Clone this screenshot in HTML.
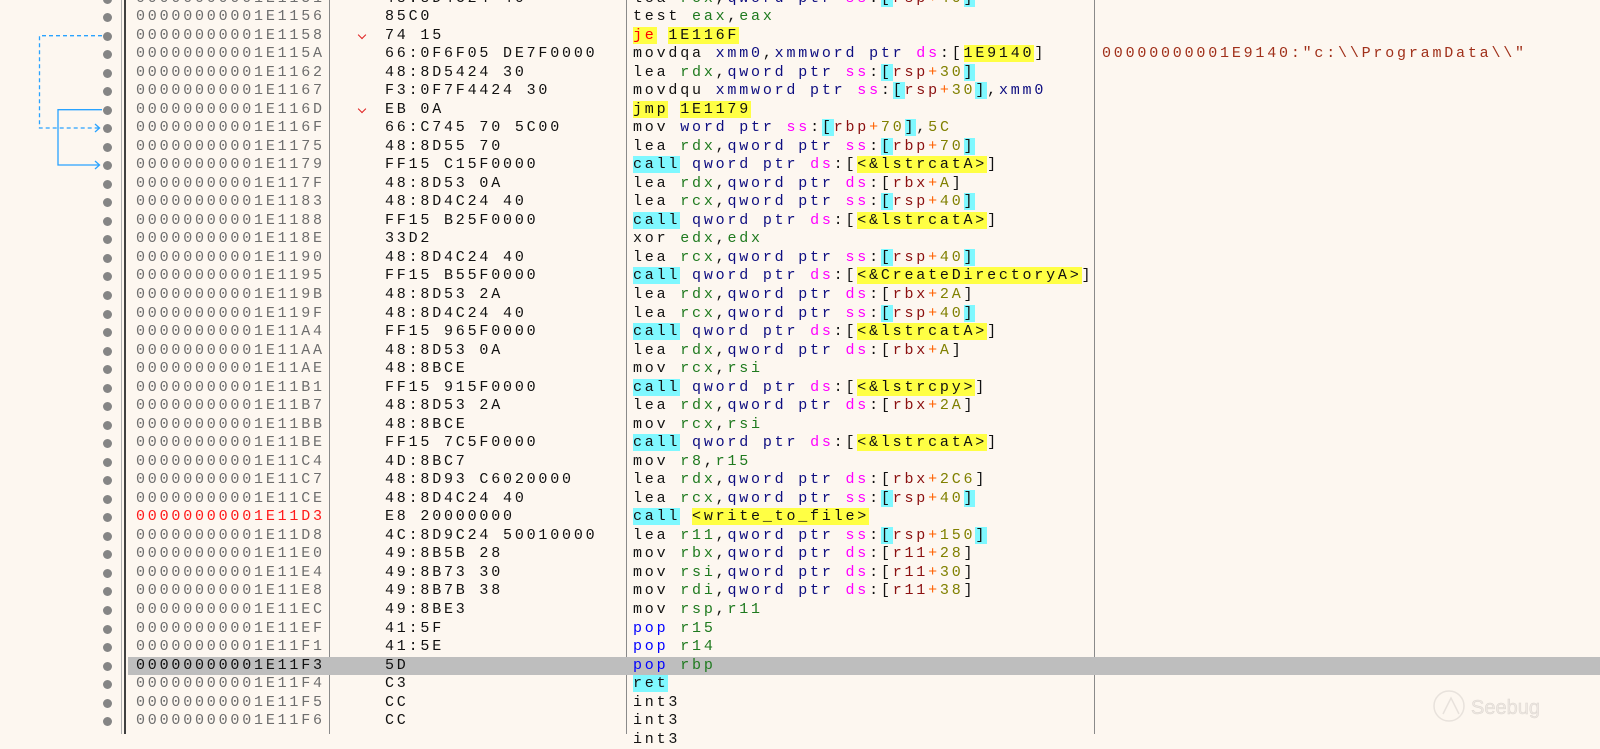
<!DOCTYPE html>
<html><head><meta charset="utf-8"><style>
html,body{margin:0;padding:0;}
body{width:1600px;height:734px;overflow:hidden;background:#fdf7f0;position:relative;font-family:"Liberation Mono",monospace;font-size:15px;letter-spacing:2.8px;}
.row{position:absolute;left:0;width:1600px;height:18.5px;line-height:18.5px;white-space:pre;}
.row.hl{background:linear-gradient(to right,transparent 128px,#bebebe 128px);}
.dot{position:absolute;left:103px;top:5px;width:9px;height:9px;border-radius:50%;background:#858585;}
.a{position:absolute;left:136px;color:#6e6e6e;}
.hl .a{color:#111;}
.a.red{color:#ff1a1a;}
.v{position:absolute;left:359px;top:5px;width:5px;height:5px;border-right:1px solid #e02020;border-bottom:1px solid #e02020;transform:rotate(45deg);}
.x{position:absolute;left:385px;color:#111;}
.d{position:absolute;left:633px;color:#111;}
.cm{position:absolute;left:1102px;color:#a0301a;}
.r{color:#1f7a1f}.q{color:#0d0d80}.s{color:#ff00ff}.g{color:#8b1010}.p{color:#ff6000}.n{color:#808000}
.b{background:#7ff8ff}.y{background:#ffff44}.c{background:#7ff8ff}.j{color:#ff0000;background:#ffff44}.pp{color:#0000ff}
.vl{position:absolute;top:0;height:734px;}
</style></head><body>
<div class="vl" style="left:121px;width:1px;background:#b0b0b0"></div>
<div class="vl" style="left:124px;width:2px;background:#404040"></div>
<div class="vl" style="left:329px;width:1px;background:#8a8a8a"></div>
<div class="vl" style="left:626px;width:1px;background:#8a8a8a"></div>
<div class="vl" style="left:1094px;width:1px;background:#8a8a8a"></div>

<svg style="position:absolute;left:0;top:0" width="130" height="200">
<g fill="none" stroke="#29a3ff" stroke-width="1.3">
<path d="M102 35.7H39.5V128H99" stroke-dasharray="4,3"/>
<path d="M95 124L99.5 128L95 132"/>
<path d="M102 109.7H58V165H99"/>
<path d="M95 161L99.5 165L95 169"/>
</g></svg>

<div class="row" style="top:-10.5px"><span class="dot"></span><span class="a">00000000001E1151</span><span class="x">48:8D4C24 40</span><span class="d">lea <span class="r">rcx</span>,<span class="q">qword ptr</span> <span class="s">ss</span>:<span class="b">[</span><span class="g">rsp</span><span class="p">+</span><span class="n">40</span><span class="b">]</span></span></div>
<div class="row" style="top:8px"><span class="dot"></span><span class="a">00000000001E1156</span><span class="x">85C0</span><span class="d">test <span class="r">eax</span>,<span class="r">eax</span></span></div>
<div class="row" style="top:26.5px"><span class="dot"></span><span class="a">00000000001E1158</span><span class="v"></span><span class="x">74 15</span><span class="d"><span class="j">je</span> <span class="y">1E116F</span></span></div>
<div class="row" style="top:45.1px"><span class="dot"></span><span class="a">00000000001E115A</span><span class="x">66:0F6F05 DE7F0000</span><span class="d">movdqa <span class="q">xmm0</span>,<span class="q">xmmword ptr</span> <span class="s">ds</span>:[<span class="y">1E9140</span>]</span><span class="cm">00000000001E9140:"c:\\ProgramData\\"</span></div>
<div class="row" style="top:63.6px"><span class="dot"></span><span class="a">00000000001E1162</span><span class="x">48:8D5424 30</span><span class="d">lea <span class="r">rdx</span>,<span class="q">qword ptr</span> <span class="s">ss</span>:<span class="b">[</span><span class="g">rsp</span><span class="p">+</span><span class="n">30</span><span class="b">]</span></span></div>
<div class="row" style="top:82.1px"><span class="dot"></span><span class="a">00000000001E1167</span><span class="x">F3:0F7F4424 30</span><span class="d">movdqu <span class="q">xmmword ptr</span> <span class="s">ss</span>:<span class="b">[</span><span class="g">rsp</span><span class="p">+</span><span class="n">30</span><span class="b">]</span>,<span class="q">xmm0</span></span></div>
<div class="row" style="top:100.7px"><span class="dot"></span><span class="a">00000000001E116D</span><span class="v"></span><span class="x">EB 0A</span><span class="d"><span class="y">jmp</span> <span class="y">1E1179</span></span></div>
<div class="row" style="top:119.2px"><span class="dot"></span><span class="a">00000000001E116F</span><span class="x">66:C745 70 5C00</span><span class="d">mov <span class="q">word ptr</span> <span class="s">ss</span>:<span class="b">[</span><span class="g">rbp</span><span class="p">+</span><span class="n">70</span><span class="b">]</span>,<span class="n">5C</span></span></div>
<div class="row" style="top:137.7px"><span class="dot"></span><span class="a">00000000001E1175</span><span class="x">48:8D55 70</span><span class="d">lea <span class="r">rdx</span>,<span class="q">qword ptr</span> <span class="s">ss</span>:<span class="b">[</span><span class="g">rbp</span><span class="p">+</span><span class="n">70</span><span class="b">]</span></span></div>
<div class="row" style="top:156.2px"><span class="dot"></span><span class="a">00000000001E1179</span><span class="x">FF15 C15F0000</span><span class="d"><span class="c">call</span> <span class="q">qword ptr</span> <span class="s">ds</span>:[<span class="y">&lt;&amp;lstrcatA&gt;</span>]</span></div>
<div class="row" style="top:174.8px"><span class="dot"></span><span class="a">00000000001E117F</span><span class="x">48:8D53 0A</span><span class="d">lea <span class="r">rdx</span>,<span class="q">qword ptr</span> <span class="s">ds</span>:[<span class="g">rbx</span><span class="p">+</span><span class="n">A</span>]</span></div>
<div class="row" style="top:193.3px"><span class="dot"></span><span class="a">00000000001E1183</span><span class="x">48:8D4C24 40</span><span class="d">lea <span class="r">rcx</span>,<span class="q">qword ptr</span> <span class="s">ss</span>:<span class="b">[</span><span class="g">rsp</span><span class="p">+</span><span class="n">40</span><span class="b">]</span></span></div>
<div class="row" style="top:211.8px"><span class="dot"></span><span class="a">00000000001E1188</span><span class="x">FF15 B25F0000</span><span class="d"><span class="c">call</span> <span class="q">qword ptr</span> <span class="s">ds</span>:[<span class="y">&lt;&amp;lstrcatA&gt;</span>]</span></div>
<div class="row" style="top:230.4px"><span class="dot"></span><span class="a">00000000001E118E</span><span class="x">33D2</span><span class="d">xor <span class="r">edx</span>,<span class="r">edx</span></span></div>
<div class="row" style="top:248.9px"><span class="dot"></span><span class="a">00000000001E1190</span><span class="x">48:8D4C24 40</span><span class="d">lea <span class="r">rcx</span>,<span class="q">qword ptr</span> <span class="s">ss</span>:<span class="b">[</span><span class="g">rsp</span><span class="p">+</span><span class="n">40</span><span class="b">]</span></span></div>
<div class="row" style="top:267.4px"><span class="dot"></span><span class="a">00000000001E1195</span><span class="x">FF15 B55F0000</span><span class="d"><span class="c">call</span> <span class="q">qword ptr</span> <span class="s">ds</span>:[<span class="y">&lt;&amp;CreateDirectoryA&gt;</span>]</span></div>
<div class="row" style="top:285.9px"><span class="dot"></span><span class="a">00000000001E119B</span><span class="x">48:8D53 2A</span><span class="d">lea <span class="r">rdx</span>,<span class="q">qword ptr</span> <span class="s">ds</span>:[<span class="g">rbx</span><span class="p">+</span><span class="n">2A</span>]</span></div>
<div class="row" style="top:304.5px"><span class="dot"></span><span class="a">00000000001E119F</span><span class="x">48:8D4C24 40</span><span class="d">lea <span class="r">rcx</span>,<span class="q">qword ptr</span> <span class="s">ss</span>:<span class="b">[</span><span class="g">rsp</span><span class="p">+</span><span class="n">40</span><span class="b">]</span></span></div>
<div class="row" style="top:323px"><span class="dot"></span><span class="a">00000000001E11A4</span><span class="x">FF15 965F0000</span><span class="d"><span class="c">call</span> <span class="q">qword ptr</span> <span class="s">ds</span>:[<span class="y">&lt;&amp;lstrcatA&gt;</span>]</span></div>
<div class="row" style="top:341.5px"><span class="dot"></span><span class="a">00000000001E11AA</span><span class="x">48:8D53 0A</span><span class="d">lea <span class="r">rdx</span>,<span class="q">qword ptr</span> <span class="s">ds</span>:[<span class="g">rbx</span><span class="p">+</span><span class="n">A</span>]</span></div>
<div class="row" style="top:360.1px"><span class="dot"></span><span class="a">00000000001E11AE</span><span class="x">48:8BCE</span><span class="d">mov <span class="r">rcx</span>,<span class="r">rsi</span></span></div>
<div class="row" style="top:378.6px"><span class="dot"></span><span class="a">00000000001E11B1</span><span class="x">FF15 915F0000</span><span class="d"><span class="c">call</span> <span class="q">qword ptr</span> <span class="s">ds</span>:[<span class="y">&lt;&amp;lstrcpy&gt;</span>]</span></div>
<div class="row" style="top:397.1px"><span class="dot"></span><span class="a">00000000001E11B7</span><span class="x">48:8D53 2A</span><span class="d">lea <span class="r">rdx</span>,<span class="q">qword ptr</span> <span class="s">ds</span>:[<span class="g">rbx</span><span class="p">+</span><span class="n">2A</span>]</span></div>
<div class="row" style="top:415.6px"><span class="dot"></span><span class="a">00000000001E11BB</span><span class="x">48:8BCE</span><span class="d">mov <span class="r">rcx</span>,<span class="r">rsi</span></span></div>
<div class="row" style="top:434.2px"><span class="dot"></span><span class="a">00000000001E11BE</span><span class="x">FF15 7C5F0000</span><span class="d"><span class="c">call</span> <span class="q">qword ptr</span> <span class="s">ds</span>:[<span class="y">&lt;&amp;lstrcatA&gt;</span>]</span></div>
<div class="row" style="top:452.7px"><span class="dot"></span><span class="a">00000000001E11C4</span><span class="x">4D:8BC7</span><span class="d">mov <span class="r">r8</span>,<span class="r">r15</span></span></div>
<div class="row" style="top:471.2px"><span class="dot"></span><span class="a">00000000001E11C7</span><span class="x">48:8D93 C6020000</span><span class="d">lea <span class="r">rdx</span>,<span class="q">qword ptr</span> <span class="s">ds</span>:[<span class="g">rbx</span><span class="p">+</span><span class="n">2C6</span>]</span></div>
<div class="row" style="top:489.8px"><span class="dot"></span><span class="a">00000000001E11CE</span><span class="x">48:8D4C24 40</span><span class="d">lea <span class="r">rcx</span>,<span class="q">qword ptr</span> <span class="s">ss</span>:<span class="b">[</span><span class="g">rsp</span><span class="p">+</span><span class="n">40</span><span class="b">]</span></span></div>
<div class="row" style="top:508.3px"><span class="dot"></span><span class="a red">00000000001E11D3</span><span class="x">E8 20000000</span><span class="d"><span class="c">call</span> <span class="y">&lt;write_to_file&gt;</span></span></div>
<div class="row" style="top:526.8px"><span class="dot"></span><span class="a">00000000001E11D8</span><span class="x">4C:8D9C24 50010000</span><span class="d">lea <span class="r">r11</span>,<span class="q">qword ptr</span> <span class="s">ss</span>:<span class="b">[</span><span class="g">rsp</span><span class="p">+</span><span class="n">150</span><span class="b">]</span></span></div>
<div class="row" style="top:545.3px"><span class="dot"></span><span class="a">00000000001E11E0</span><span class="x">49:8B5B 28</span><span class="d">mov <span class="r">rbx</span>,<span class="q">qword ptr</span> <span class="s">ds</span>:[<span class="g">r11</span><span class="p">+</span><span class="n">28</span>]</span></div>
<div class="row" style="top:563.9px"><span class="dot"></span><span class="a">00000000001E11E4</span><span class="x">49:8B73 30</span><span class="d">mov <span class="r">rsi</span>,<span class="q">qword ptr</span> <span class="s">ds</span>:[<span class="g">r11</span><span class="p">+</span><span class="n">30</span>]</span></div>
<div class="row" style="top:582.4px"><span class="dot"></span><span class="a">00000000001E11E8</span><span class="x">49:8B7B 38</span><span class="d">mov <span class="r">rdi</span>,<span class="q">qword ptr</span> <span class="s">ds</span>:[<span class="g">r11</span><span class="p">+</span><span class="n">38</span>]</span></div>
<div class="row" style="top:600.9px"><span class="dot"></span><span class="a">00000000001E11EC</span><span class="x">49:8BE3</span><span class="d">mov <span class="r">rsp</span>,<span class="r">r11</span></span></div>
<div class="row" style="top:619.5px"><span class="dot"></span><span class="a">00000000001E11EF</span><span class="x">41:5F</span><span class="d"><span class="pp">pop</span> <span class="r">r15</span></span></div>
<div class="row" style="top:638px"><span class="dot"></span><span class="a">00000000001E11F1</span><span class="x">41:5E</span><span class="d"><span class="pp">pop</span> <span class="r">r14</span></span></div>
<div class="row hl" style="top:656.5px"><span class="dot"></span><span class="a">00000000001E11F3</span><span class="x">5D</span><span class="d"><span class="pp">pop</span> <span class="r">rbp</span></span></div>
<div class="row" style="top:675px"><span class="dot"></span><span class="a">00000000001E11F4</span><span class="x">C3</span><span class="d"><span class="c">ret</span></span></div>
<div class="row" style="top:693.6px"><span class="dot"></span><span class="a">00000000001E11F5</span><span class="x">CC</span><span class="d">int3</span></div>
<div class="row" style="top:712.1px"><span class="dot"></span><span class="a">00000000001E11F6</span><span class="x">CC</span><span class="d">int3</span></div>
<div class="row" style="top:730.6px"><span class="d">int3</span></div>

<svg style="position:absolute;left:1433px;top:686px" width="120" height="42">
<circle cx="16" cy="20" r="15" fill="none" stroke="#e8e2dc" stroke-width="1.5"/>
<path d="M10 28L18 12L26 28" fill="none" stroke="#e8e2dc" stroke-width="1.5"/>
<text x="38" y="28" font-family="Liberation Sans,sans-serif" font-size="20" letter-spacing="0" fill="#eee8e2" stroke="#dcd6d0" stroke-width="0.5">Seebug</text>
</svg>
</body></html>
